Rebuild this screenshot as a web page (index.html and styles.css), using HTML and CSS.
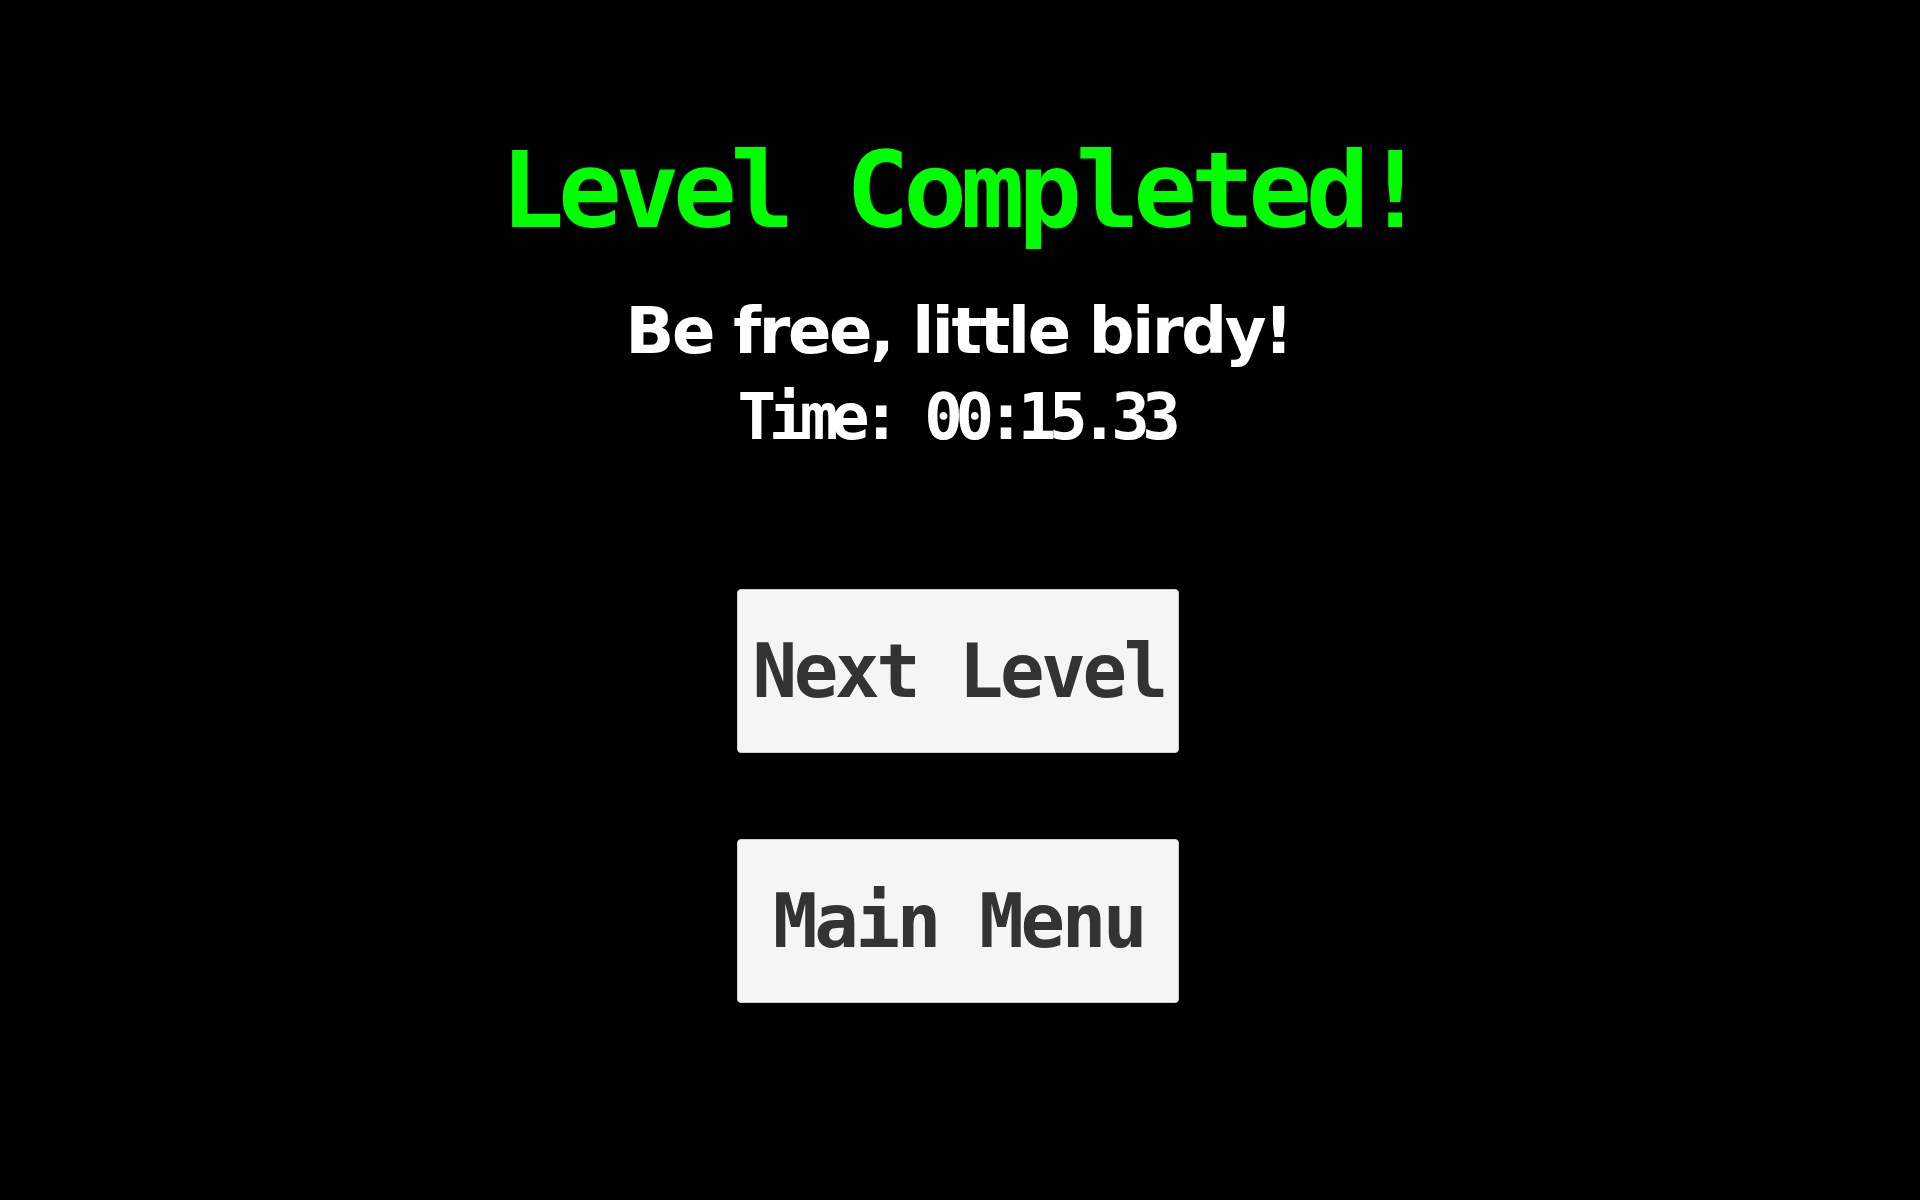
FILE: index.html
```html
<!DOCTYPE html>
<html lang="en">
<head>
<meta charset="utf-8">
<title>Level Completed</title>
<link rel="stylesheet" href="styles.css">
</head>
<body>
<main class="screen">
  <h1 class="title">Level Completed!</h1>
  <div class="info">
    <p class="message">Be free, little birdy!</p>
    <p class="time">Time: 00:15.33</p>
  </div>
  <div class="actions">
    <button class="btn" type="button">Next Level</button>
    <button class="btn" type="button">Main Menu</button>
  </div>
</main>
</body>
</html>
```
FILE: styles.css
```css
html, body {
  margin: 0;
  padding: 0;
  background: #000;
  width: 1920px;
  height: 1200px;
  overflow: hidden;
}

.screen {
  box-sizing: border-box;
  width: 1920px;
  display: flex;
  flex-direction: column;
  align-items: center;
  padding: 138px 4px 0 0;
  font-family: "DejaVu Sans Mono", "Liberation Mono", monospace;
  font-weight: bold;
}

.title {
  margin: 0;
  font-size: 106px;
  line-height: 106px;
  font-weight: bold;
  color: #00ff00;
  letter-spacing: -6.3px;
  padding-left: 5.4px;
}

.info {
  margin-top: 44px;
  display: flex;
  flex-direction: column;
  align-items: center;
}

.message,
.time {
  margin: 0;
  font-size: 64px;
  line-height: 86px;
  color: #fff;
}

.message {
  font-family: "DejaVu Sans", "Liberation Sans", sans-serif;
  letter-spacing: -2.3px;
  padding-left: 0.6px;
}

.time {
  letter-spacing: -7.4px;
  padding-right: 5px;
}

.actions {
  margin-top: 129px;
  display: flex;
  flex-direction: column;
  align-items: center;
  gap: 86px;
}

.btn {
  box-sizing: border-box;
  width: 442px;
  height: 164px;
  margin: 0;
  padding: 0 0 0 1.5px;
  display: flex;
  align-items: center;
  justify-content: center;
  background: #f5f5f5;
  border: 1px solid #cfcfcf;
  border-radius: 4px;
  color: #333;
  font-family: "DejaVu Sans Mono", "Liberation Mono", monospace;
  font-weight: bold;
  font-size: 74px;
  line-height: 74px;
  letter-spacing: -3.3px;
}
```
